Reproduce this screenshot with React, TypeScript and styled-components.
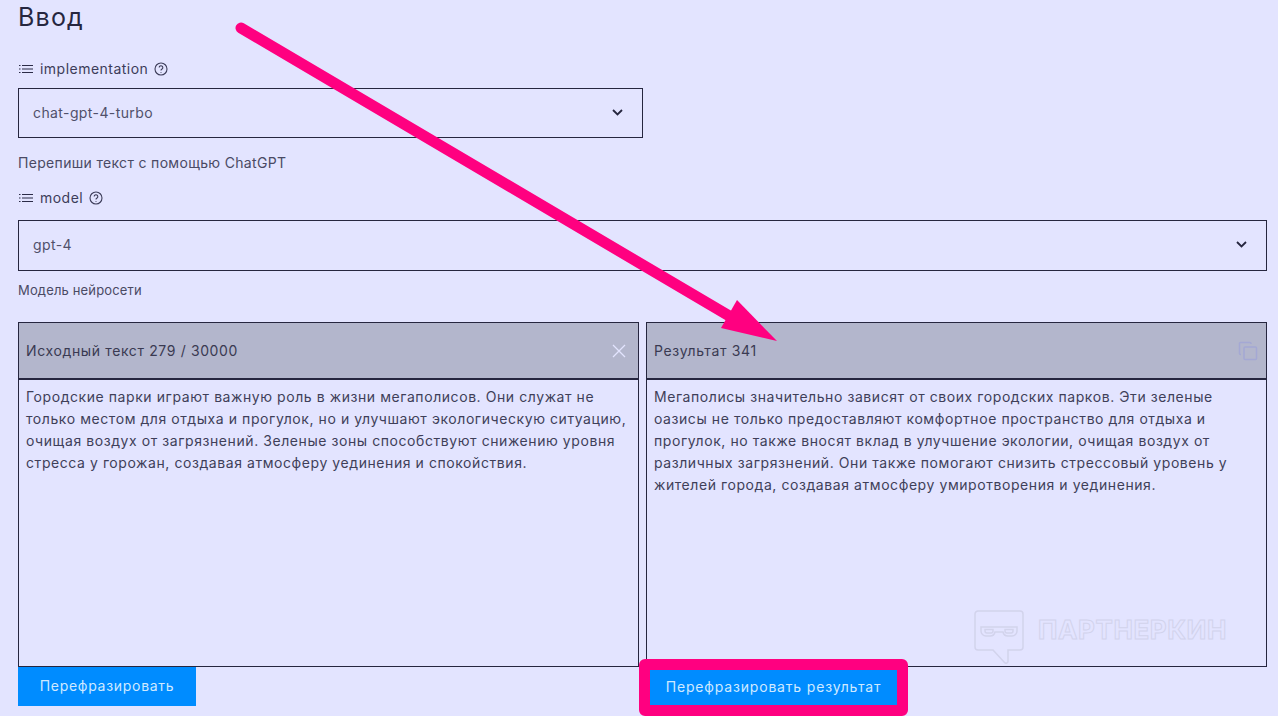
import React from "react";
import styled, { createGlobalStyle } from "styled-components";

const Global = createGlobalStyle`
  html, body { margin: 0; padding: 0; height: 716px; overflow: hidden; background: #e3e4ff; }
  * { box-sizing: border-box; }
`;
const Page = styled.div`
  position: relative; width: 1278px; height: 716px; overflow: hidden;
  padding: 0 11px 0 18px; background: #e3e4ff; color: #2b2b47;
  font-family: Inter, "Liberation Sans", sans-serif;
`;
const Title = styled.h1`
  margin: 0; height: 36px; line-height: 35px; font-size: 25px; font-weight: 400; letter-spacing: 1.2px; color: #26263f;
`;
const Label = styled.div<{ $top: number }>`
  display: flex; align-items: center; gap: 6px; height: 20px; margin-top: ${p => p.$top}px;
  font-size: 14px; line-height: 18px; letter-spacing: 0.48px; color: #3d3d5a;
`;
const Select = styled.div<{ $w?: number; $h: number; $top: number }>`
  display: flex; align-items: center; justify-content: space-between;
  width: ${p => (p.$w ? `${p.$w}px` : "100%")}; height: ${p => p.$h}px; margin-top: ${p => p.$top}px;
  padding: 0 19px 2px 14px; border: 1px solid #26263f;
  font-size: 14px; letter-spacing: 0.4px; color: #50506a;
`;
const Hint = styled.div<{ $top: number; $size: number; $track: number }>`
  height: 16px; line-height: 15px; margin-top: ${p => p.$top}px;
  font-size: ${p => p.$size}px; letter-spacing: ${p => p.$track}px; color: #4a4a64;
`;
const Panels = styled.div`
  display: grid; grid-template-columns: 621px 621px; gap: 7px; margin-top: 23px; height: 345px;
`;
const Panel = styled.section`
  display: flex; flex-direction: column; border: 1px solid #26263f;
`;
const PanelHead = styled.header`
  display: flex; align-items: center; justify-content: space-between; flex: 0 0 57px;
  padding: 0 8px 0 7px; background: #b3b6cc; border-bottom: 2px solid #26263f;
  font-size: 14px; letter-spacing: 0.63px; color: #3a3a52;
`;
const PanelBody = styled.div`
  flex: 1; padding: 6px 7px; font-size: 14px; line-height: 22px; letter-spacing: 0.57px;
  color: #3f3f59; white-space: pre-line;
`;
const Actions = styled.div`
  display: flex; align-items: flex-start;
`;
const Button = styled.button<{ $w: number; $track: number }>`
  width: ${p => p.$w}px; height: 39px; border: 0; padding: 0 0 2px; background: #008cff; color: #cfe9ff;
  font-family: inherit; font-size: 14px; letter-spacing: ${p => p.$track}px;
`;
const Highlight = styled.div`
  margin: -8px 0 0 443px; width: 269px; height: 57px; padding: 0;
  border: 11px solid #ff0080; border-radius: 6px; background: #008cff;
  display: flex; align-items: center; justify-content: center;
  ${Button} { height: 35px; }
`;
const Arrow = styled.svg`
  position: absolute; left: 0; top: 0; pointer-events: none;
`;
const Watermark = styled.div`
  position: absolute; left: 974px; top: 610px; display: flex; align-items: flex-start; gap: 14px;
`;
const MarkText = styled.span`
  margin-top: 8px; font-size: 26px; line-height: 24px; font-weight: 700; letter-spacing: 0.6px;
  color: transparent; -webkit-text-stroke: 1px #d2d3ec;
`;

const ListIcon = () => (
  <svg width="16" height="10" viewBox="0 0 16 10" fill="none" stroke="#2b2b47" strokeWidth="1.2">
    <path d="M1 1.500h1.500M1 5h1.500M1 8.500h1.500M4 1.500h11M4 5h11M4 8.500h11" />
  </svg>
);
const Help = () => (
  <svg width="14" height="14" viewBox="0 0 14 14" fill="none" stroke="#3d3d5a" strokeWidth="1.1">
    <circle cx="7" cy="7" r="6" />
    <path d="M5.200 5.600a1.800 1.800 0 1 1 2.800 1.500c-.7.400-1 .7-1 1.500" />
    <path d="M7 10v.8" />
  </svg>
);
const Chevron = () => (
  <svg width="11" height="7" viewBox="0 0 11 7" fill="none" stroke="#26263f" strokeWidth="1.800">
    <path d="M1 1l4.500 4.500L10 1" />
  </svg>
);
const CloseIcon = () => (
  <svg width="14" height="14" viewBox="0 0 14 14" stroke="#e3e4ff" strokeWidth="1.300" fill="none" style={{ marginRight: 4 }}>
    <path d="M1 1l12 12M13 1 1 13" />
  </svg>
);
const CopyIcon = () => (
  <svg width="20" height="20" viewBox="0 0 20 20" fill="none" stroke="#a4a8d4" strokeWidth="1.500">
    <path d="M3 13.500H2.500a1 1 0 0 1-1-1V2.500a1 1 0 0 1 1-1H12a1 1 0 0 1 1 1V3" />
    <rect x="6" y="6" width="12.500" height="12.500" rx="1" />
  </svg>
);
const Logo = () => (
  <svg width="50" height="55" viewBox="0 0 50 55" fill="none" stroke="#d2d3ec" strokeWidth="1.500">
    <path d="M4 1h42a3 3 0 0 1 3 3v33a3 3 0 0 1-3 3H34v11a2 2 0 0 1-3.500 1.500L19 40H4a3 3 0 0 1-3-3V4a3 3 0 0 1 3-3z" />
    <path d="M7 17h36v4a5 5 0 0 1-5 5h-4a5 5 0 0 1-5-4h-8a5 5 0 0 1-5 4h-4a5 5 0 0 1-5-5z" />
    <path d="M11 19.500h8v1.500a2 2 0 0 1-2 2h-4a2 2 0 0 1-2-2zM31 19.500h8v1.500a2 2 0 0 1-2 2h-4a2 2 0 0 1-2-2z" />
  </svg>
);

const source = `Городские парки играют важную роль в жизни мегаполисов. Они служат не
только местом для отдыха и прогулок, но и улучшают экологическую ситуацию,
очищая воздух от загрязнений. Зеленые зоны способствуют снижению уровня
стресса у горожан, создавая атмосферу уединения и спокойствия.`;
const result = `Мегаполисы значительно зависят от своих городских парков. Эти зеленые
оазисы не только предоставляют комфортное пространство для отдыха и
прогулок, но также вносят вклад в улучшение экологии, очищая воздух от
различных загрязнений. Они также помогают снизить стрессовый уровень у
жителей города, создавая атмосферу умиротворения и уединения.`;

export default function App() {
  return (
    <Page>
      <Global />
      <Title>Ввод</Title>
      <Label $top={23}><ListIcon />implementation<Help /></Label>
      <Select $w={625} $h={50} $top={9}>chat-gpt-4-turbo<Chevron /></Select>
      <Hint $top={17} $size={14} $track={0.32}>Перепиши текст с помощью ChatGPT</Hint>
      <Label $top={17}><ListIcon />model<Help /></Label>
      <Select $h={51} $top={12}>gpt-4<Chevron /></Select>
      <Hint $top={12} $size={13} $track={0.15}>Модель нейросети</Hint>
      <Panels>
        <Panel>
          <PanelHead>Исходный текст 279 / 30000<CloseIcon /></PanelHead>
          <PanelBody>{source}</PanelBody>
        </Panel>
        <Panel>
          <PanelHead>Результат 341<CopyIcon /></PanelHead>
          <PanelBody>{result}</PanelBody>
        </Panel>
      </Panels>
      <Actions>
        <Button $w={178} $track={0.7}>Перефразировать</Button>
        <Highlight><Button $w={247} $track={0.82}>Перефразировать результат</Button></Highlight>
      </Actions>
      <Watermark><Logo /><MarkText>ПАРТНЕРКИН</MarkText></Watermark>
      <Arrow width="1278" height="716" viewBox="0 0 1278 716">
        <path d="M241 28 748 327" stroke="#ff0080" strokeWidth="11" strokeLinecap="round" fill="none" />
        <path d="M777 341 721 328 737 300z" fill="#ff0080" />
      </Arrow>
    </Page>
  );
}
